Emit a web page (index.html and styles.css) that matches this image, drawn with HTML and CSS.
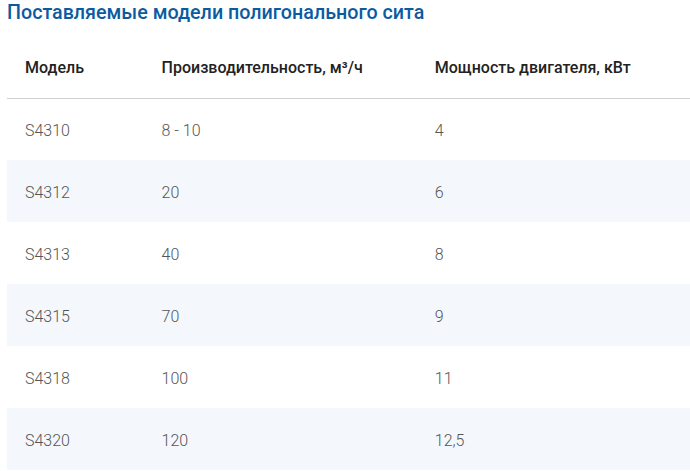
FILE: index.html
```html
<!DOCTYPE html>
<html lang="ru">
<head>
<meta charset="utf-8">
<link rel="stylesheet" href="styles.css">
</head>
<body>
<div class="wrap">
  <h2 class="title">Поставляемые модели полигонального сита</h2>
  <table class="models">
    <thead>
      <tr><th class="c1">Модель</th><th class="c2">Производительность, м³/ч</th><th class="c3">Мощность двигателя, кВт</th></tr>
    </thead>
    <tbody>
      <tr><td>S4310</td><td>8 - 10</td><td>4</td></tr>
      <tr><td>S4312</td><td>20</td><td>6</td></tr>
      <tr><td>S4313</td><td>40</td><td>8</td></tr>
      <tr><td>S4315</td><td>70</td><td>9</td></tr>
      <tr><td>S4318</td><td>100</td><td>11</td></tr>
      <tr><td>S4320</td><td>120</td><td>12,5</td></tr>
    </tbody>
  </table>
</div>
</body>
</html>
```
FILE: styles.css
```css
html, body {
  margin: 0;
  padding: 0;
  background: #fff;
}
body {
  font-family: Roboto, "Liberation Sans", sans-serif;
}
.wrap {
  padding: 0 0 0 7px;
  width: 683px;
}
.title {
  margin: 0 0 11px 0;
  height: 26px;
  line-height: 26px;
  font-size: 19.7px;
  font-weight: 500;
  color: #0b5ba1;
}
.models {
  width: 683px;
  border-collapse: collapse;
  table-layout: fixed;
}
.models th, .models td {
  height: 62px;
  padding: 0 18px;
  box-sizing: border-box;
  text-align: left;
  vertical-align: middle;
  font-size: 16px;
}
.models th {
  height: 61px;
  padding-top: 1px;
  font-weight: 500;
  color: #222;
  border-bottom: 1px solid #cfcfcf;
}
.models td {
  padding-top: 2px;
  font-weight: 300;
  color: #555;
}
.c1 { width: 20%; }
.c2 { width: 40%; }
.c3 { width: 40%; }
.models tbody tr:nth-child(even) td {
  background: #f4f8fd;
}
```
